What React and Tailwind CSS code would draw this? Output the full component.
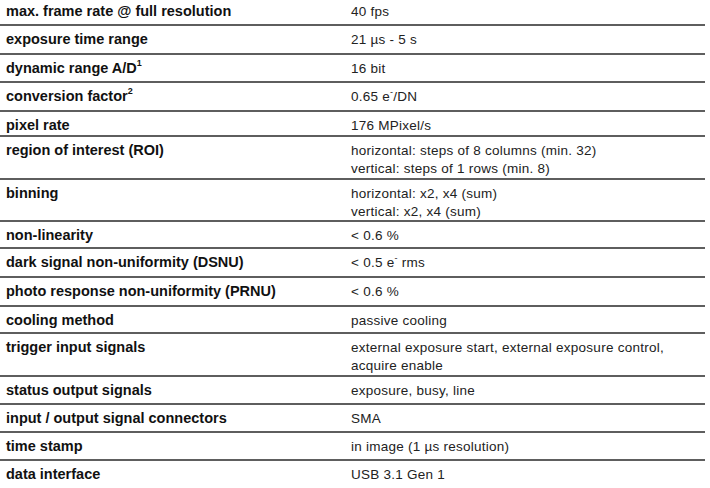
import React from "react";

const Sup = ({ children }) => (
  <sup className="relative -top-[1px] text-[9px] align-super leading-none">{children}</sup>
);

// spec rows: label, value lines, row height (incl. 2px bottom rule)
const specs = [
  { label: "max. frame rate @ full resolution", value: ["40 fps"], h: "h-[26px]", first: true },
  { label: "exposure time range", value: ["21 µs - 5 s"], h: "h-[29px]" },
  {
    label: (
      <>
        dynamic range A/D<Sup>1</Sup>
      </>
    ),
    value: ["16 bit"],
    h: "h-[28px]",
  },
  {
    label: (
      <>
        conversion factor<Sup>2</Sup>
      </>
    ),
    value: [
      <>
        0.65 e<Sup>-</Sup>/DN
      </>,
    ],
    h: "h-[29px]",
  },
  { label: "pixel rate", value: ["176 MPixel/s"], h: "h-[25px]" },
  {
    label: "region of interest (ROI)",
    value: ["horizontal: steps of 8 columns (min. 32)", "vertical: steps of 1 rows (min. 8)"],
    h: "h-[43px]",
  },
  {
    label: "binning",
    value: ["horizontal: x2, x4 (sum)", "vertical: x2, x4 (sum)"],
    h: "h-[42px]",
  },
  { label: "non-linearity", value: ["< 0.6 %"], h: "h-[27px]" },
  {
    label: "dark signal non-uniformity (DSNU)",
    value: [
      <>
        {"< 0.5 e"}
        <Sup>-</Sup> rms
      </>,
    ],
    h: "h-[29px]",
  },
  { label: "photo response non-uniformity (PRNU)", value: ["< 0.6 %"], h: "h-[29px]" },
  { label: "cooling method", value: ["passive cooling"], h: "h-[27px]" },
  {
    label: "trigger input signals",
    value: ["external exposure start, external exposure control,", "acquire enable"],
    h: "h-[43px]",
  },
  { label: "status output signals", value: ["exposure, busy, line"], h: "h-[28px]" },
  { label: "input / output signal connectors", value: ["SMA"], h: "h-[28px]" },
  { label: "time stamp", value: ["in image (1 µs resolution)"], h: "h-[28px]" },
  { label: "data interface", value: ["USB 3.1 Gen 1"], h: "h-[27px]", last: true },
];

export default function App() {
  return (
    <div className="w-[710px] h-[488px] overflow-hidden bg-white font-['Liberation_Sans',Arial,sans-serif]">
      <div className="w-[705px]">
        {specs.map((row, i) => (
          <div
            key={i}
            className={`flex items-baseline ${row.first ? "pt-[3px]" : "pt-[5px]"} ${row.h} ${
              row.last ? "" : "border-b-2 border-[#5e5e5e]"
            }`}
          >
            <div className="w-[330px] pl-[6px] text-[14.5px] leading-[17px] font-bold text-[#111]">
              {row.label}
            </div>
            <div className="flex-1 pl-[21px] text-[13.5px] leading-[17.5px] tracking-[0.25px] text-[#222]">
              {row.value.map((v, j) => (
                <div key={j}>{v}</div>
              ))}
            </div>
          </div>
        ))}
      </div>
    </div>
  );
}
